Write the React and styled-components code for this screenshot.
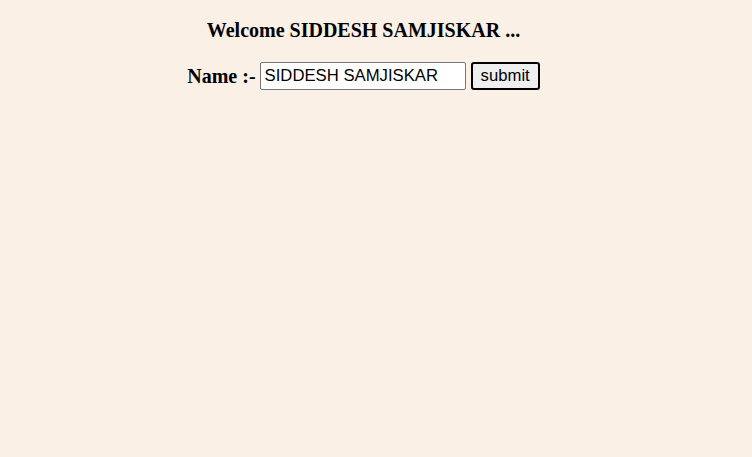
import styled, { createGlobalStyle } from 'styled-components';

const GlobalStyle = createGlobalStyle`
  html, body {
    margin: 0;
    background-color: #faf0e6;
  }
  body {
    font-family: "Liberation Serif", "Times New Roman", serif;
  }
`;

const App = () => {
  return (
    <>
      <GlobalStyle />
      <Page>
        <Heading>Welcome SIDDESH SAMJISKAR ...</Heading>
        <Form onSubmit={e => e.preventDefault()}>
          <Label>Name :-</Label>
          <NameInput type="text" defaultValue="SIDDESH SAMJISKAR" />
          <SubmitButton type="submit">submit</SubmitButton>
        </Form>
      </Page>
    </>
  );
};

const Page = styled.div`
  min-height: 457px;
  padding: 19px 25px 0 0;
  box-sizing: border-box;
  display: flex;
  flex-direction: column;
  align-items: center;
`;

const Heading = styled.h3`
  margin: 0;
  font-size: 20px;
  font-weight: bold;
  color: #000;
`;

const Form = styled.form`
  display: flex;
  align-items: center;
  margin-top: 20px;
`;

const Label = styled.span`
  font-size: 20px;
  font-weight: bold;
  margin-right: 4px;
`;

const NameInput = styled.input`
  width: 206px;
  height: 28px;
  box-sizing: border-box;
  border: 1px solid #767676;
  border-radius: 2px;
  padding: 1px 4px;
  font-family: "Liberation Sans", Arial, sans-serif;
  font-size: 16.7px;
  color: #000;
  background: #fff;
`;

const SubmitButton = styled.button`
  margin-left: 5px;
  height: 28px;
  padding: 1px 8px;
  border: 2px solid #000;
  border-radius: 3px;
  background-color: #efefef;
  font-family: "Liberation Sans", Arial, sans-serif;
  font-size: 16.7px;
  color: #000;
`;

export default App;
